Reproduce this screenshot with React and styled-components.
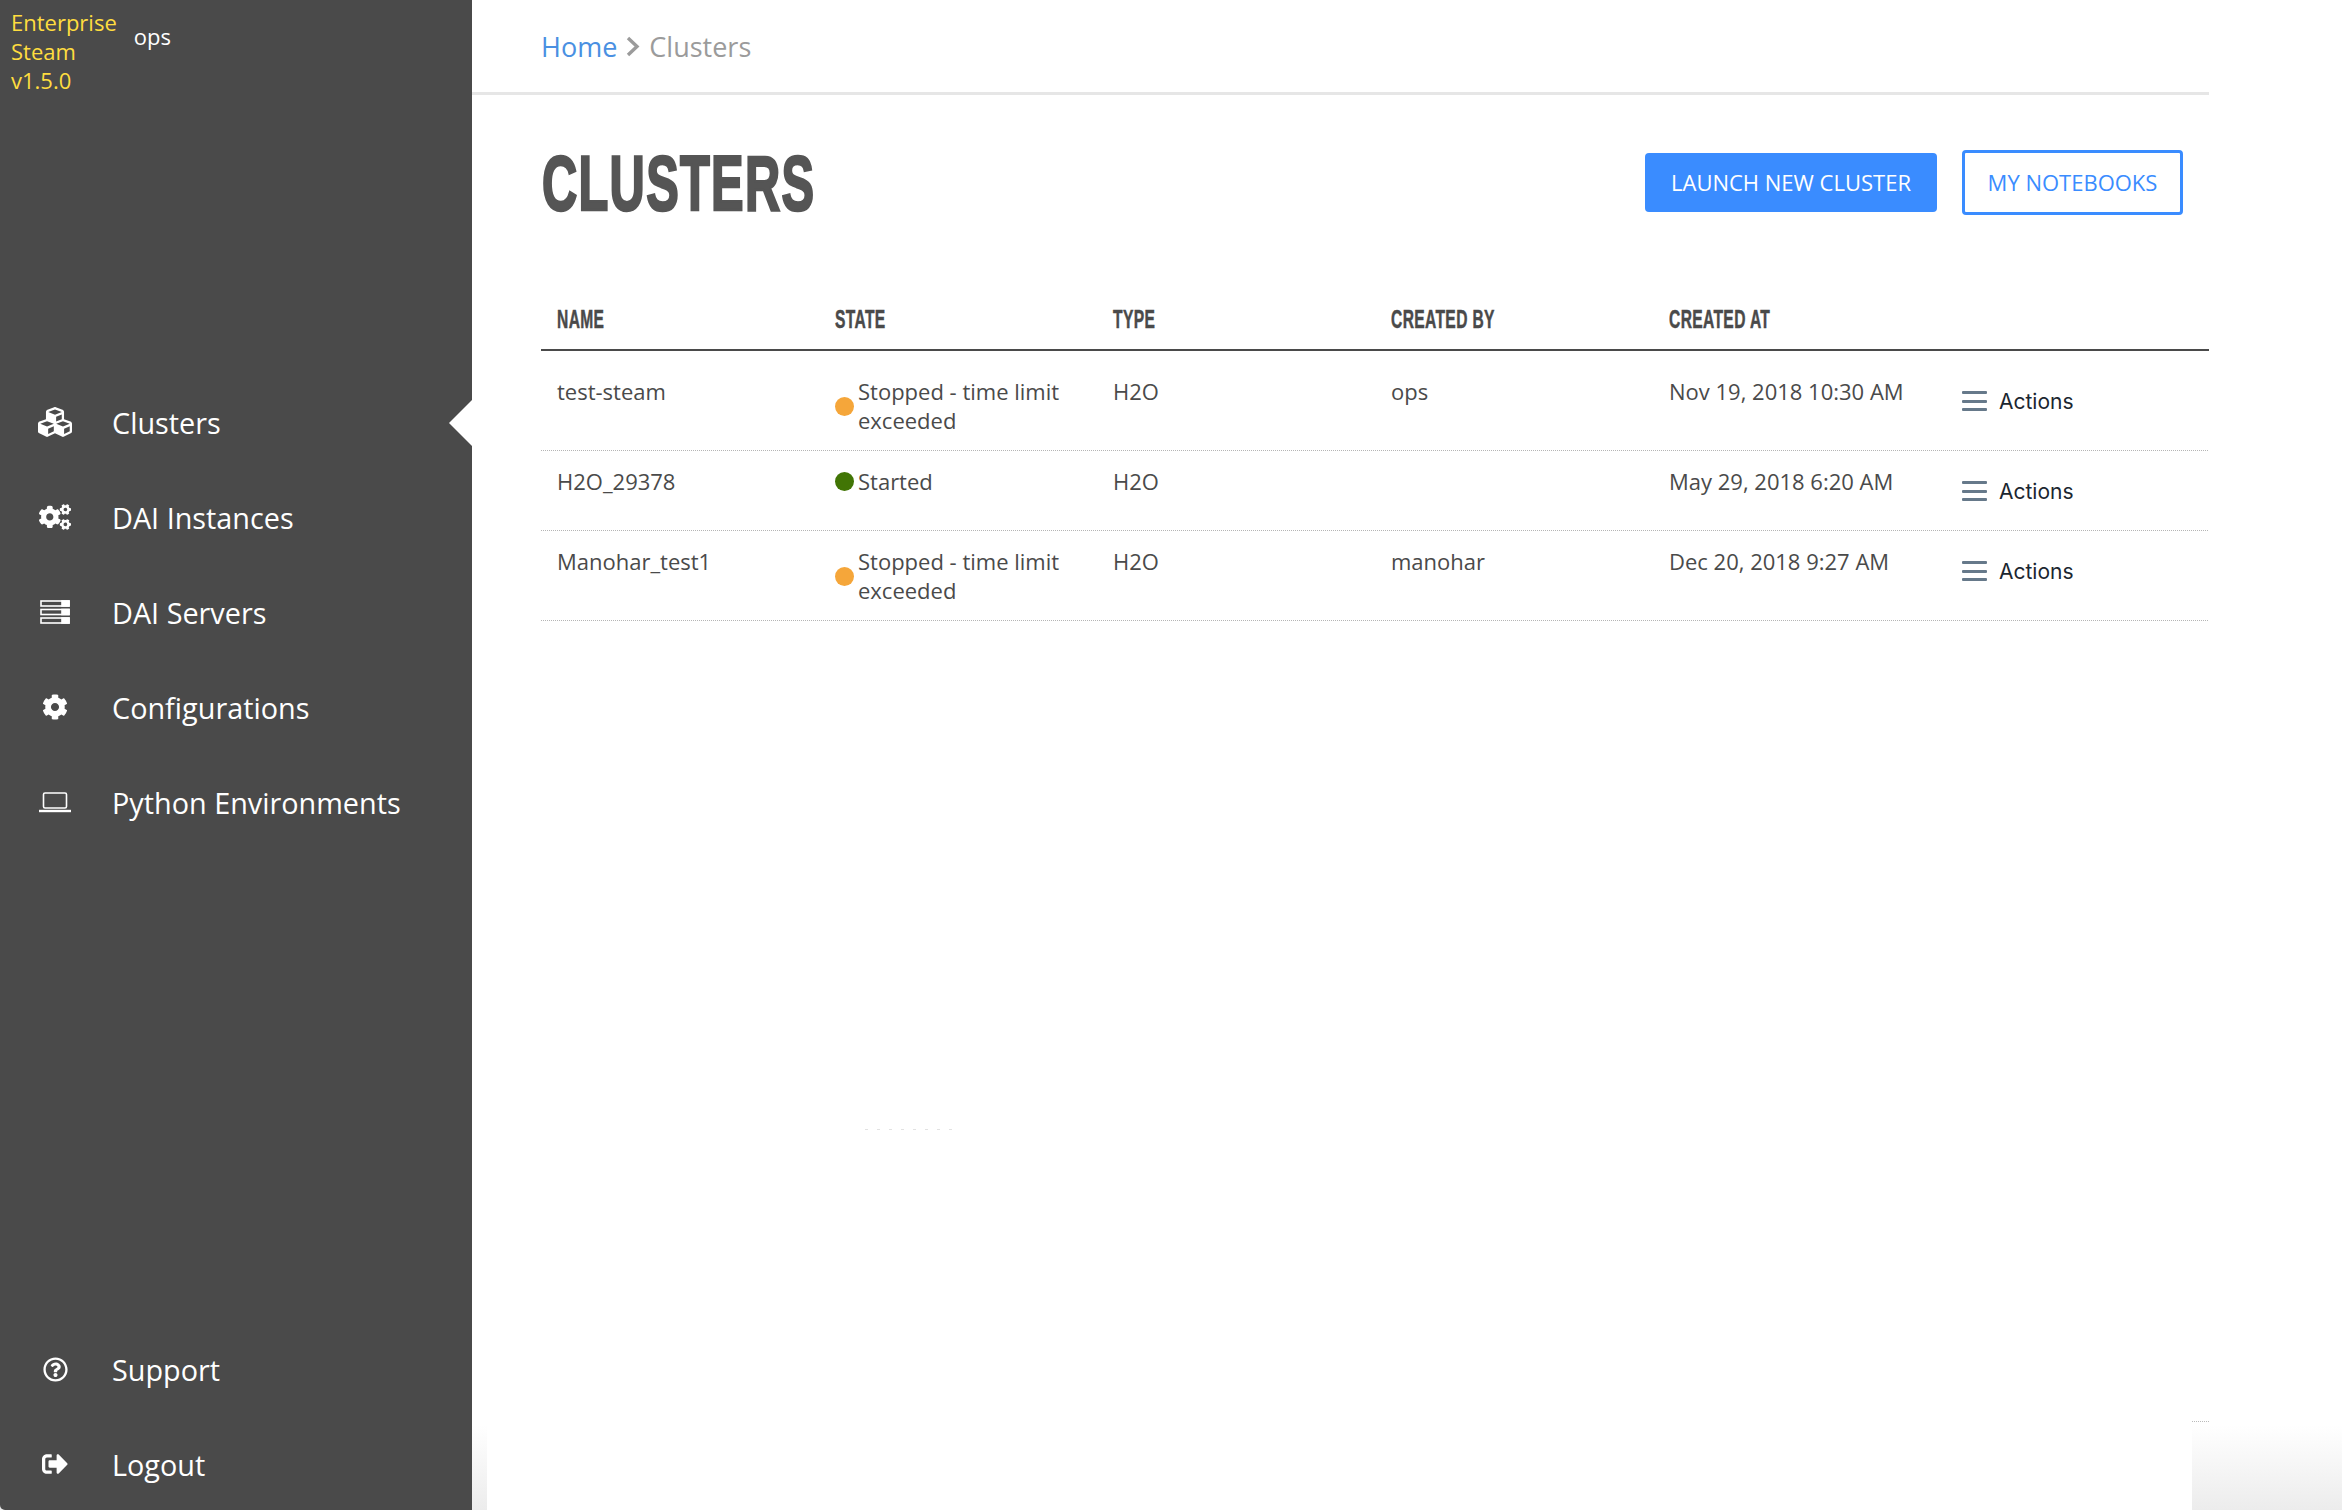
import React from "react";
import styled, { createGlobalStyle } from "styled-components";
import { FaCubes, FaCogs, FaCog, FaRegQuestionCircle, FaSignOutAlt } from "react-icons/fa";

const GlobalStyle = createGlobalStyle`
  html, body {
    margin: 0;
    height: 100%;
    overflow: hidden;
  }
  body {
    font-family: "Open Sans", "Liberation Sans", sans-serif;
    color: #4a4a4a;
    background: linear-gradient(to bottom, #fff 1425px, #ececec 1510px);
  }
`;

const Page = styled.div`
  display: flex;
  height: 100vh;
`;

const Sidebar = styled.aside`
  box-sizing: border-box;
  width: 472px;
  flex: none;
  display: flex;
  flex-direction: column;
  padding-bottom: 1px;
  background: #4a4a4a;
  border-bottom-left-radius: 5px;
`;

const Brand = styled.div`
  display: flex;
  gap: 17px;
  padding: 8px 0 0 11px;
  font-size: 22px;
  line-height: 29px;
`;

const BrandName = styled.div`
  color: #ffdd3f;
`;

const UserName = styled.div`
  color: #fff;
  margin-top: 14px;
`;

const Nav = styled.nav`
  display: flex;
  flex-direction: column;
  gap: 5px;
  margin-top: ${(p) => p.$top || "auto"};
`;

const NavItem = styled.a`
  position: relative;
  display: flex;
  align-items: center;
  height: 90px;
  color: #fff;
  font-size: 28.8px;
  gap: 32px;
  padding-left: 30px;

  ${(p) =>
    p.$active &&
    `
    &::after {
      content: "";
      position: absolute;
      right: 0;
      top: 23px;
      border-style: solid;
      border-width: 23px 23px 23px 0;
      border-color: transparent #fff transparent transparent;
    }
  `}
`;

const IconSlot = styled.span`
  width: 50px;
  flex: none;
  display: flex;
  justify-content: center;
  align-items: center;
`;

const Panel = styled.main`
  position: relative;
  flex: 1;
  margin: 0 150px 0 15px;
  background: #fff;

  /* stray table rule that pokes out of the panel at the bottom right */
  &::after {
    content: "";
    position: absolute;
    left: 100%;
    top: 1421px;
    width: 17px;
    border-top: 1px dotted #bbb;
  }

  &::before {
    content: "";
    position: absolute;
    left: 378px;
    top: 1129px;
    width: 87px;
    height: 1px;
    background: repeating-linear-gradient(to right, #e2e2e2 0 3px, transparent 3px 12px);
  }
`;

const Inner = styled.div`
  position: relative;
  margin: 0 -17px 0 -15px;
`;

const Breadcrumb = styled.div`
  display: flex;
  align-items: center;
  gap: 9px;
  height: 92px;
  padding-left: 69px;
  border-bottom: 3px solid #e6e6e6;
  background: #fff;
  font-size: 27px;
`;

const Crumb = styled.span`
  color: ${(p) => (p.$link ? "#4a90e2" : "#9b9b9b")};
`;

const TitleRow = styled.div`
  display: flex;
  align-items: center;
  justify-content: space-between;
  height: 175px;
  padding: 0 26px 0 70px;
  background: #fff;
`;

const Title = styled.h1`
  margin: 0;
  font-family: "Liberation Sans", sans-serif;
  font-weight: 700;
  font-size: 77px;
  line-height: 90px;
  letter-spacing: 2px;
  color: #555;
  -webkit-text-stroke: 2.6px #555;
`;

const Squeezed = styled.span`
  display: inline-block;
  transform: scaleX(${(p) => p.$x});
  transform-origin: left center;
`;

const Buttons = styled.div`
  display: flex;
  align-items: center;
  gap: 25px;
`;

const Button = styled.button`
  box-sizing: border-box;
  height: ${(p) => (p.$outline ? "65px" : "59px")};
  width: ${(p) => (p.$outline ? "221px" : "292px")};
  padding: 0 0 2px;
  font: 22px "Open Sans", sans-serif;
  color: ${(p) => (p.$outline ? "#3a8cff" : "#fff")};
  background: ${(p) => (p.$outline ? "#fff" : "#3a8cff")};
  border: ${(p) => (p.$outline ? "3px solid #3a8cff" : "none")};
  border-radius: 4px;
`;

const TableWrap = styled.div`
  padding-left: 69px;
`;

const Table = styled.table`
  width: 1668px;
  table-layout: fixed;
  border-collapse: collapse;
  font-size: 22px;
  line-height: 29px;
`;

const Th = styled.th`
  width: 278px;
  height: 80px;
  box-sizing: border-box;
  padding: 0 16px 12px;
  vertical-align: bottom;
  text-align: left;
  border-bottom: 2px solid #4a4a4a;
  font-family: "Liberation Sans", sans-serif;
  font-weight: 700;
  font-size: 26px;
  line-height: 35px;
  letter-spacing: 0.6px;
  white-space: nowrap;
  color: #4a4a4a;
  -webkit-text-stroke: 0.5px #4a4a4a;
`;

const Row = styled.tr`
  &:first-child td {
    padding-top: 26px;
  }
`;

const Td = styled.td`
  padding: 16px;
  vertical-align: top;
  color: #4a4a4a;
  background: repeating-linear-gradient(to right, #b5b5b5 0 1px, transparent 1px 2px) left bottom / 100% 1px no-repeat;
`;

const Status = styled.div`
  display: flex;
  align-items: center;
  gap: 4px;
`;

const Dot = styled.span`
  width: 19px;
  height: 19px;
  flex: none;
  border-radius: 50%;
  background: ${(p) => (p.$ok ? "#417505" : "#f5a63a")};
`;

const Actions = styled.div`
  display: flex;
  align-items: center;
  height: 48px;
  gap: 12px;
  margin-left: 15px;
  font-family: Inter, "Open Sans", sans-serif;
  font-size: 21px;
  color: #1b2630;
`;

const Burger = styled.span`
  display: flex;
  flex-direction: column;
  justify-content: space-between;
  width: 25px;
  height: 20px;

  i {
    display: block;
    height: 3px;
    background: #66798a;
    border-radius: 1px;
  }
`;

const ServerIcon = () => (
  <svg width="30" height="24" viewBox="0 0 30 24" fill="none" stroke="#fff" strokeWidth="1.6">
    <rect x="1" y="1" width="28" height="5" />
    <rect x="1" y="9.5" width="28" height="5" />
    <rect x="1" y="18" width="28" height="5" />
    <rect x="22" y="1" width="7" height="5" fill="#fff" />
    <rect x="22" y="9.5" width="7" height="5" fill="#fff" />
    <rect x="22" y="18" width="7" height="5" fill="#fff" />
  </svg>
);

const LaptopIcon = () => (
  <svg width="32" height="21" viewBox="0 0 32 21" fill="none" stroke="#fff" strokeWidth="1.6">
    <rect x="4.5" y="1" width="23" height="15" rx="1.5" />
    <path d="M0 19h32" strokeWidth="2.4" />
  </svg>
);

const ChevronIcon = () => (
  <svg width="14" height="21" viewBox="0 0 14 21" fill="none" stroke="#9b9b9b" strokeWidth="3.4">
    <path d="M2 2l9 8.5-9 8.5" />
  </svg>
);

const menu = [
  { label: "Clusters", icon: <FaCubes size={34} color="#fff" />, active: true },
  { label: "DAI Instances", icon: <FaCogs size={32} color="#fff" /> },
  { label: "DAI Servers", icon: <ServerIcon /> },
  { label: "Configurations", icon: <FaCog size={26} color="#fff" /> },
  { label: "Python Environments", icon: <LaptopIcon /> },
];

const footerMenu = [
  { label: "Support", icon: <FaRegQuestionCircle size={25} color="#fff" /> },
  { label: "Logout", icon: <FaSignOutAlt size={26} color="#fff" /> },
];

const columns = ["NAME", "STATE", "TYPE", "CREATED BY", "CREATED AT", ""];

const STOPPED = "Stopped - time limit exceeded";

const clusters = [
  { name: "test-steam", state: STOPPED, type: "H2O", by: "ops", at: "Nov 19, 2018 10:30 AM" },
  { name: "H2O_29378", state: "Started", ok: true, type: "H2O", by: "", at: "May 29, 2018 6:20 AM" },
  { name: "Manohar_test1", state: STOPPED, type: "H2O", by: "manohar", at: "Dec 20, 2018 9:27 AM" },
];

export default function App() {
  return (
    <Page>
      <GlobalStyle />
      <Sidebar>
        <Brand>
          <BrandName>
            Enterprise
            <br />
            Steam
            <br />
            v1.5.0
          </BrandName>
          <UserName>ops</UserName>
        </Brand>
        <Nav $top="282px">
          {menu.map((m) => (
            <NavItem key={m.label} $active={m.active}>
              <IconSlot>{m.icon}</IconSlot>
              {m.label}
            </NavItem>
          ))}
        </Nav>
        <Nav>
          {footerMenu.map((m) => (
            <NavItem key={m.label}>
              <IconSlot>{m.icon}</IconSlot>
              {m.label}
            </NavItem>
          ))}
        </Nav>
      </Sidebar>
      <Panel>
        <Inner>
          <Breadcrumb>
            <Crumb $link>Home</Crumb>
            <ChevronIcon />
            <Crumb>Clusters</Crumb>
          </Breadcrumb>
          <TitleRow>
            <Title>
              <Squeezed $x={0.634}>CLUSTERS</Squeezed>
            </Title>
            <Buttons>
              <Button>LAUNCH NEW CLUSTER</Button>
              <Button $outline>MY NOTEBOOKS</Button>
            </Buttons>
          </TitleRow>
          <TableWrap>
            <Table>
              <thead>
                <tr>
                  {columns.map((c) => (
                    <Th key={c}>
                      <Squeezed $x={0.6}>{c}</Squeezed>
                    </Th>
                  ))}
                </tr>
              </thead>
              <tbody>
                {clusters.map((c) => (
                  <Row key={c.name}>
                    <Td>{c.name}</Td>
                    <Td>
                      <Status>
                        <Dot $ok={c.ok} />
                        <span>{c.state}</span>
                      </Status>
                    </Td>
                    <Td>{c.type}</Td>
                    <Td>{c.by}</Td>
                    <Td>{c.at}</Td>
                    <Td>
                      <Actions>
                        <Burger>
                          <i />
                          <i />
                          <i />
                        </Burger>
                        Actions
                      </Actions>
                    </Td>
                  </Row>
                ))}
              </tbody>
            </Table>
          </TableWrap>
        </Inner>
      </Panel>
    </Page>
  );
}
